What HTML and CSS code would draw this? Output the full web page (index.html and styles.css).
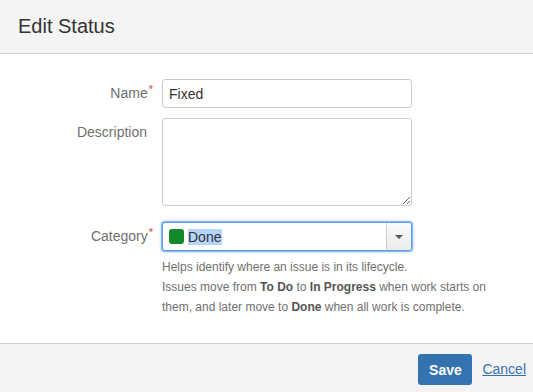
FILE: index.html
```html
<!DOCTYPE html>
<html lang="en">
<head>
    <meta charset="UTF-8">
    <title>Edit Status</title>
    <link rel="stylesheet" href="styles.css">
</head>
<body>
    <div class="dialog">
        <div class="dialog-header">
            <h2>Edit Status</h2>
        </div>

        <form class="dialog-body">
            <label class="field-label" for="name">Name<span class="req">*</span></label>
            <div class="field">
                <input type="text" id="name" class="text-input" value="Fixed">
            </div>

            <label class="field-label" for="desc">Description</label>
            <div class="field">
                <textarea id="desc" class="text-area"></textarea>
            </div>

            <label class="field-label label-cat">Category<span class="req">*</span></label>
            <div class="field field-cat">
                <div class="select focused">
                    <span class="swatch"></span>
                    <span class="select-value">Done</span>
                    <span class="select-drop"><span class="caret"></span></span>
                </div>
                <div class="help">
                    Helps identify where an issue is in its lifecycle.<br>
                    Issues move from <b>To Do</b> to <b>In Progress</b> when work starts on them, and later move to <b>Done</b> when all work is complete.
                </div>
            </div>
        </form>

        <div class="dialog-footer">
            <button class="btn-save">Save</button>
            <a href="#" class="link-cancel">Cancel</a>
        </div>
    </div>
</body>
</html>
```

FILE: styles.css
```css
body {
    margin: 0;
    font-family: "Liberation Sans", Arial, sans-serif;
    color: #333;
    background: #fff;
}
.dialog {
    width: 533px;
    height: 392px;
    display: flex;
    flex-direction: column;
}
.dialog-header {
    height: 53px;
    background-color: #f4f4f4;
    border-bottom: 1px solid #cfcfcf;
    display: flex;
    align-items: center;
    padding-left: 18px;
}
.dialog-header h2 {
    margin: 0;
    font-size: 20px;
    font-weight: normal;
    color: #333;
}
.dialog-body {
    flex: 1;
    display: grid;
    grid-template-columns: 147px 1fr;
    column-gap: 15px;
    row-gap: 10px;
    align-content: start;
    padding-top: 25px;
}
.field-label {
    text-align: right;
    font-size: 14px;
    color: #707070;
    line-height: 29px;
    height: 29px;
}
.label-cat,
.field-cat {
    margin-top: 6px;
}
.req {
    color: #d04437;
    font-size: 11px;
    line-height: 0;
    vertical-align: 5px;
    margin-right: -6px;
    margin-left: 1px;
}
.text-input {
    box-sizing: border-box;
    width: 250px;
    height: 29px;
    border: 1px solid #ccc;
    border-radius: 3px;
    padding: 4px 6px;
    font-family: inherit;
    font-size: 14px;
    color: #333;
    display: block;
}
.text-area {
    box-sizing: border-box;
    display: block;
    width: 250px;
    height: 88px;
    border: 1px solid #ccc;
    border-radius: 3px;
    font-family: inherit;
    font-size: 14px;
    resize: vertical;
}
.select {
    box-sizing: border-box;
    width: 250px;
    height: 29px;
    border: 1px solid #ccc;
    border-radius: 3px;
    display: flex;
    align-items: center;
    padding-left: 6px;
    background: #fff;
}
.select.focused {
    border-color: #5b9ee8;
    box-shadow: 0 0 0 1px #8ab8ef, 0 0 3px 1px #a9ccf3;
}
.swatch {
    width: 15px;
    height: 15px;
    border-radius: 3px;
    background-color: #14892c;
    margin-right: 4px;
}
.select-value {
    flex: 1;
    font-size: 14px;
    color: #333;
    background: linear-gradient(#b4d5fd, #b4d5fd) no-repeat left center / 34px 18px;
}
.select-drop {
    width: 24px;
    align-self: stretch;
    border-left: 1px solid #ccc;
    background: linear-gradient(#fafafa, #ececec);
    border-radius: 0 2px 2px 0;
    display: flex;
    align-items: center;
    justify-content: center;
}
.caret {
    width: 0;
    height: 0;
    border-left: 4px solid transparent;
    border-right: 4px solid transparent;
    border-top: 4px solid #555;
}
.help {
    width: 340px;
    margin-top: 6px;
    font-size: 12px;
    line-height: 20px;
    color: #707070;
}
.help b {
    color: #555;
}
.dialog-footer {
    height: 49px;
    background-color: #f4f4f4;
    border-top: 1px solid #cfcfcf;
    display: flex;
    justify-content: flex-end;
    align-items: flex-start;
    padding: 10px 7px 0 0;
    box-sizing: border-box;
    gap: 10px;
}
.btn-save {
    width: 54px;
    height: 31px;
    background-color: #3572b0;
    color: #fff;
    border: none;
    border-radius: 3px;
    font-family: inherit;
    font-size: 14px;
    font-weight: bold;
}
.link-cancel {
    color: #3572b0;
    font-size: 14px;
    line-height: 31px;
}
```
